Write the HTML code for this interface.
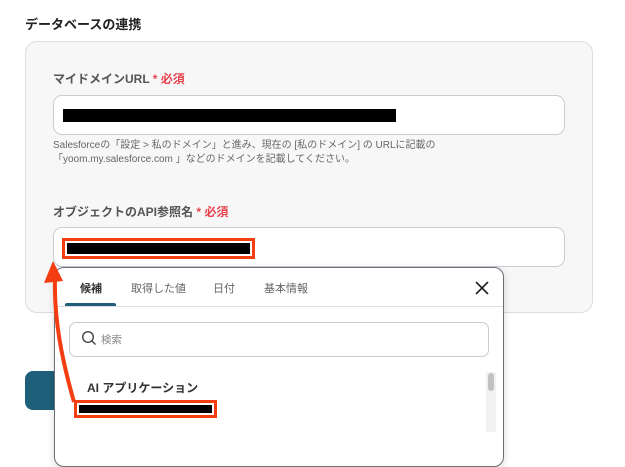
<!DOCTYPE html><html><head><meta charset="utf-8"><style>
*{margin:0;padding:0;box-sizing:border-box}
body{width:625px;height:426px;background:#fff;font-family:"Liberation Sans","Noto Sans CJK JP",sans-serif;position:relative;overflow:hidden;color:#333}
.a{position:absolute}
</style></head><body>
<div class="a" style="left:25px;top:14px;font-size:13px;font-weight:bold;color:#222">データベースの連携</div>
<div class="a" style="left:25px;top:41px;width:568px;height:272px;background:#f7f7f8;border:1px solid #dcdde0;border-radius:12px"></div>
<div class="a" style="left:53px;top:70px;font-size:12px;font-weight:bold;color:#555">マイドメインURL <span style="color:#e8414c">* 必須</span></div>
<div class="a" style="left:53px;top:95px;width:512px;height:40px;background:#fff;border:1px solid #c9ccd2;border-radius:9px"></div>
<div class="a" style="left:63px;top:109px;width:333px;height:13px;background:#000"></div>
<div class="a" style="left:53px;top:139px;font-size:10px;line-height:14px;color:#666">Salesforceの「設定 &gt; 私のドメイン」と進み、現在の [私のドメイン] の URLに記載の<br>「yoom.my.salesforce.com 」などのドメインを記載してください。</div>
<div class="a" style="left:53px;top:203px;font-size:12px;font-weight:bold;color:#555">オブジェクトのAPI参照名 <span style="color:#e8414c">* 必須</span></div>
<div class="a" style="left:53px;top:227px;width:512px;height:40px;background:#fff;border:1px solid #c9ccd2;border-radius:9px"></div>
<div class="a" style="left:62px;top:238px;width:193px;height:21px;border:3px solid #f43e12;background:#000;box-shadow:inset 0 0 0 2px #fff"></div>
<div class="a" style="left:25px;top:371px;width:40px;height:39px;background:#1e5f7a;border-radius:8px"></div>
<div class="a" style="left:54px;top:267px;width:450px;height:200px;background:#fff;border:1px solid #6b6e75;border-radius:10px;box-shadow:0 2px 8px rgba(0,0,0,.15)"></div>
<div class="a" style="left:80px;top:280px;font-size:11px;font-weight:bold;color:#333">候補</div>
<div class="a" style="left:131px;top:280px;font-size:11px;color:#666">取得した値</div>
<div class="a" style="left:213px;top:280px;font-size:11px;color:#666">日付</div>
<div class="a" style="left:264px;top:280px;font-size:11px;color:#666">基本情報</div>
<div class="a" style="left:55px;top:306px;width:448px;height:1px;background:#dcdde0"></div>
<div class="a" style="left:65px;top:303px;width:51px;height:3px;background:#1e5f7a;border-radius:2px 2px 0 0"></div>
<svg class="a" style="left:474px;top:280px" width="16" height="16"><path d="M2 2L14 14M14 2L2 14" stroke="#222" stroke-width="1.6"/></svg>
<div class="a" style="left:69px;top:322px;width:420px;height:35px;border:1px solid #c9ccd2;border-radius:7px"></div>
<svg class="a" style="left:81px;top:330px" width="16" height="16"><circle cx="7" cy="7" r="5.3" fill="none" stroke="#444" stroke-width="1.4"/><path d="M11 11L14.5 14.5" stroke="#444" stroke-width="1.4"/></svg>
<div class="a" style="left:101px;top:332px;font-size:10.5px;color:#888">検索</div>
<div class="a" style="left:87px;top:379px;font-size:12px;font-weight:bold;color:#333">AI アプリケーション</div>
<div class="a" style="left:486px;top:372px;width:10px;height:60px;background:#f2f2f2"></div>
<div class="a" style="left:488px;top:373px;width:6px;height:18px;background:#c1c1c1;border-radius:3px"></div>
<div class="a" style="left:74px;top:400px;width:143px;height:18px;border:3px solid #f43e12;background:#000;box-shadow:inset 0 0 0 2px #fff"></div>
<svg class="a" style="left:0;top:0" width="625" height="426"><path d="M74 402C62 360 54 320 55 280" fill="none" stroke="#f43e12" stroke-width="4"/><path d="M44 283L53 261L63 281Z" fill="#f43e12"/></svg>
</body></html>
